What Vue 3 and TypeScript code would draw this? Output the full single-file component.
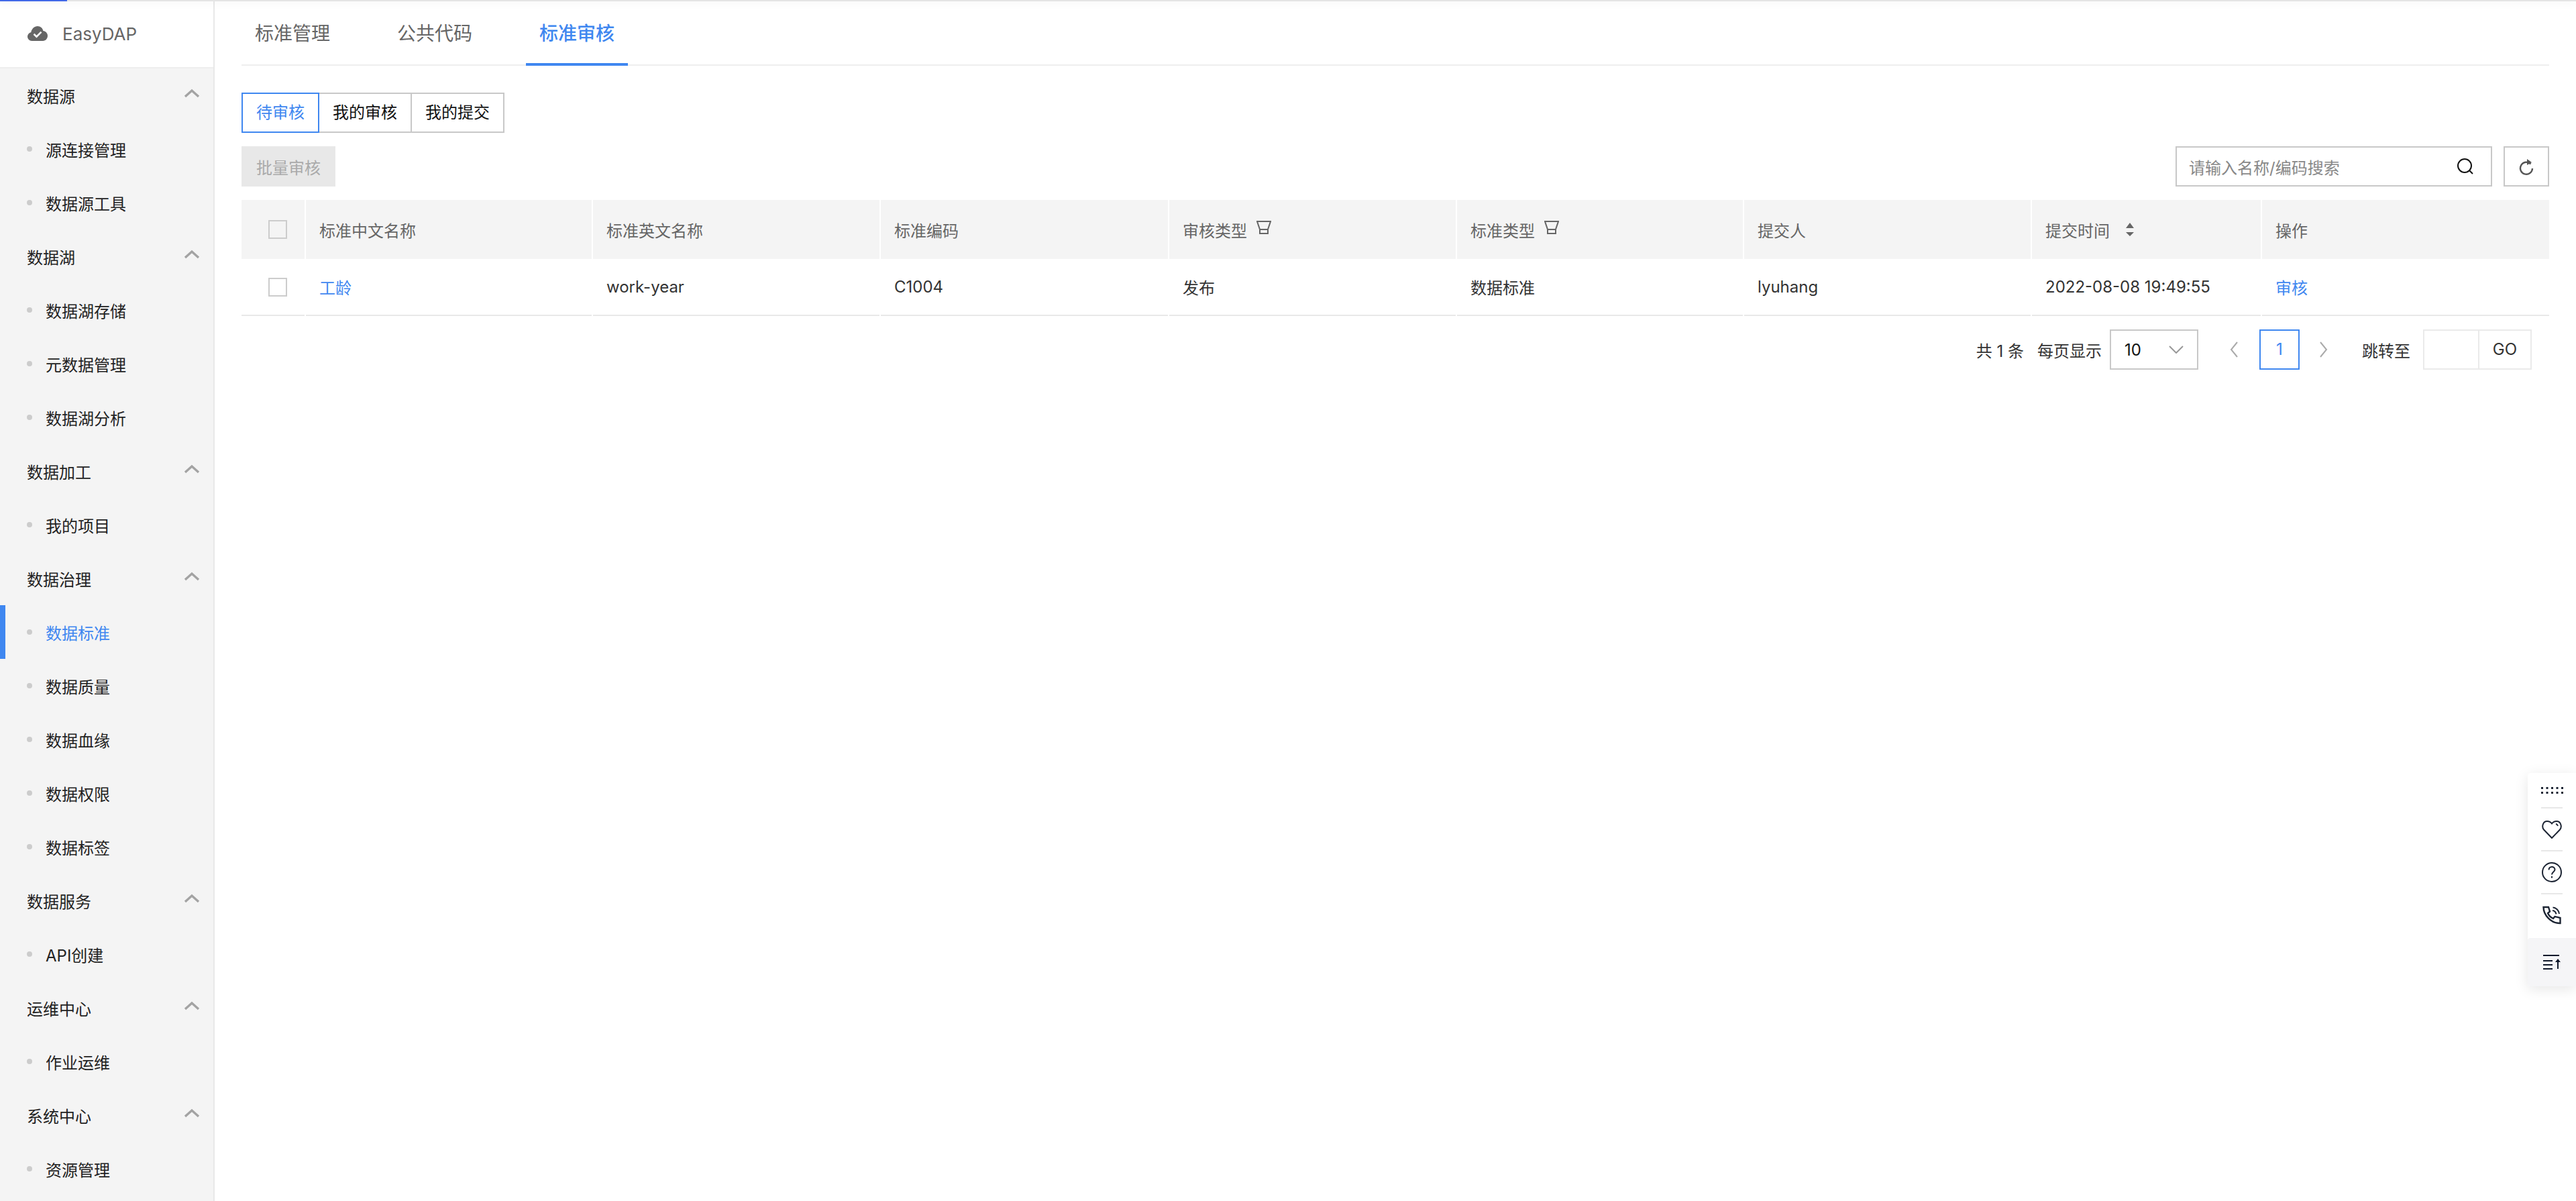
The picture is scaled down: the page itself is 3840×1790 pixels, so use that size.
<script setup lang="ts">
interface MenuGroup {
  name: string;
  items: string[];
}

const menu: MenuGroup[] = [
  { name: "数据源", items: ["源连接管理", "数据源工具"] },
  { name: "数据湖", items: ["数据湖存储", "元数据管理", "数据湖分析"] },
  { name: "数据加工", items: ["我的项目"] },
  { name: "数据治理", items: ["数据标准", "数据质量", "数据血缘", "数据权限", "数据标签"] },
  { name: "数据服务", items: ["API创建"] },
  { name: "运维中心", items: ["作业运维"] },
  { name: "系统中心", items: ["资源管理"] },
];

const tabs = ["标准管理", "公共代码", "标准审核"];
const reviewTabs = ["待审核", "我的审核", "我的提交"];

const columns = [
  { title: "标准中文名称", value: "工龄", link: true },
  { title: "标准英文名称", value: "work-year" },
  { title: "标准编码", value: "C1004" },
  { title: "审核类型", value: "发布", filter: true },
  { title: "标准类型", value: "数据标准", filter: true },
  { title: "提交人", value: "lyuhang" },
  { title: "提交时间", value: "2022-08-08 19:49:55", sort: true },
  { title: "操作", value: "审核", link: true },
];
</script>

<template>
  <div class="page">
    <div class="top-bar"><div class="progress"></div></div>

    <aside class="side">
      <div class="logo">
        <svg class="logo-icon" width="30" height="22" viewBox="0 0 30 22">
          <path fill="#666" d="M15 0c4.300 0 7.700 3 8.300 7.100C27 7.600 30 10.500 30 14.300 30 18.600 27 22 23 22H6.500C2.800 22 0 19.200 0 15.600c0-3.200 2.200-5.800 5.200-6.400C6.300 3.900 10.200 0 15 0z" />
          <path fill="none" stroke="#fff" stroke-width="2.600" d="M9.500 11.800l4 3.800 7-7" />
        </svg>
        <span>EasyDAP</span>
      </div>
      <template v-for="group in menu" :key="group.name">
        <div class="group">
          <span>{{ group.name }}</span>
          <svg width="24" height="14" viewBox="0 0 24 14">
            <path fill="none" stroke="#a3a3a3" stroke-width="3.400" d="M2 12L12 3l10 9" />
          </svg>
        </div>
        <div v-for="item in group.items" :key="item" class="item" :class="{ active: item === '数据标准' }">
          <i class="dot"></i>{{ item }}
        </div>
      </template>
    </aside>

    <main class="main">
      <nav class="tabs">
        <div v-for="(t, i) in tabs" :key="t" class="tab" :class="{ on: i === 2 }">{{ t }}</div>
      </nav>

      <div class="review-tabs">
        <div v-for="(t, i) in reviewTabs" :key="t" class="review-tab" :class="{ on: i === 0 }">{{ t }}</div>
      </div>

      <div class="toolbar">
        <button class="batch">批量审核</button>
        <div class="tools">
          <div class="search">
            <span>请输入名称/编码搜索</span>
            <svg width="26" height="26" viewBox="0 0 26 26">
              <circle cx="12" cy="12" r="10" fill="none" stroke="#111" stroke-width="2" />
              <path fill="none" stroke="#111" stroke-width="2" d="M19 19l5 5" />
            </svg>
          </div>
          <div class="refresh">
            <svg width="24" height="26" viewBox="0 0 24 26">
              <path fill="none" stroke="#555" stroke-width="2.400" d="M18.500 9.500A9 9 0 1 0 21 16" />
              <path fill="#555" d="M13 2l7 5-7 4z" />
            </svg>
          </div>
        </div>
      </div>

      <div class="table">
        <div class="cell head check-cell"><i class="check"></i></div>
        <div v-for="c in columns" :key="c.title" class="cell head">
          {{ c.title }}
          <svg v-if="c.filter" class="filter" width="22" height="20" viewBox="0 0 22 20">
            <path fill="none" stroke="#666" stroke-width="2" d="M1 1h20l-4 12v6H5v-6zM5 13h12" />
          </svg>
          <svg v-if="c.sort" class="sort" width="12" height="20" viewBox="0 0 12 20">
            <path fill="#666" d="M6 0l6 8H0zM0 14h12l-6 6z" />
          </svg>
        </div>
        <div class="cell body check-cell"><i class="check"></i></div>
        <div v-for="c in columns" :key="c.value" class="cell body" :class="{ link: c.link }">{{ c.value }}</div>
      </div>

      <div class="pager">
        <span class="total">共 1 条</span>
        <span class="per">每页显示</span>
        <div class="size">
          <span>10</span>
          <svg width="22" height="12" viewBox="0 0 22 12">
            <path fill="none" stroke="#999" stroke-width="2" d="M1 1l10 10L21 1" />
          </svg>
        </div>
        <div class="arrow first">
          <svg width="12" height="24" viewBox="0 0 12 24"><path fill="none" stroke="#aaa" stroke-width="2" d="M11 1L2 12l9 11" /></svg>
        </div>
        <div class="num">1</div>
        <div class="arrow">
          <svg width="12" height="24" viewBox="0 0 12 24"><path fill="none" stroke="#aaa" stroke-width="2" d="M1 1l9 11-9 11" /></svg>
        </div>
        <span class="jump">跳转至</span>
        <div class="jump-input"></div>
        <div class="go">GO</div>
      </div>
    </main>

    <div class="float">
      <div class="float-cell grip">
        <svg width="34" height="12" viewBox="0 0 34 12" fill="#1c2433">
          <template v-for="x in [1, 8.500, 16, 23.500, 31]" :key="x">
            <rect :x="x" y="1" width="3" height="3" />
            <rect :x="x" y="8" width="3" height="3" />
          </template>
        </svg>
      </div>
      <div class="line"></div>
      <div class="float-cell">
        <svg width="30" height="28" viewBox="0 0 30 28" fill="none" stroke="#1c2433" stroke-width="2">
          <path d="M15 27L3 14.500C-.5 10.500 1.500 2 8 2c3 0 5.500 1.500 7 3.500C16.500 3.500 19 2 22 2c6.500 0 8.500 8.500 5 12.500z" />
          <path d="M21 6c1.500.3 2.500 1.300 3 3" />
        </svg>
      </div>
      <div class="line"></div>
      <div class="float-cell">
        <svg width="30" height="30" viewBox="0 0 30 30" fill="none" stroke="#1c2433" stroke-width="2">
          <circle cx="15" cy="15" r="14" />
          <path d="M10.500 11.500c0-6 9-6 9-.5 0 3.500-4.500 3.500-4.500 7.500" />
          <path d="M15 21v2.500" />
        </svg>
      </div>
      <div class="line"></div>
      <div class="float-cell">
        <svg width="28" height="28" viewBox="0 0 28 28" fill="none" stroke="#1c2433" stroke-width="2">
          <path stroke-width="2.400" d="M1.500 2H9l2 6.500-3 2.500c1.500 3.500 4.500 6.500 8 8l2.500-3 8 2v8C13.500 26.500 1.500 14.500 1.500 2z" />
          <path d="M15 7c3 .5 5 2.500 5.500 5.500M15.500 2.500c5 .5 9 4.500 9.500 9.500" />
        </svg>
      </div>
      <div class="float-bottom">
        <svg width="26" height="22" viewBox="0 0 26 22" fill="none" stroke="#10182a" stroke-width="2">
          <path d="M0 1h24M0 9h14M0 15h14M0 21h14M22 21V8" />
          <path fill="#10182a" stroke="none" d="M22 6l4 5h-8z" />
        </svg>
      </div>
    </div>
  </div>
</template>

<style>
html,
body {
  margin: 0;
  overflow: hidden;
  background: #fff;
}
</style>

<style scoped>
.page {
  position: relative;
  display: flex;
  width: 3840px;
  height: 1790px;
  overflow: hidden;
  font-family: Inter, "Noto Sans CJK SC", sans-serif;
  font-size: 24px;
  color: #333;
}

.top-bar {
  position: absolute;
  top: 0;
  left: 0;
  right: 0;
  height: 2px;
  background: #e4e4e4;
  box-shadow: 0 2px 12px rgba(0, 0, 0, 0.12);
}

.progress {
  width: 100px;
  height: 2px;
  background: #4169e8;
}

.side {
  flex: none;
  box-sizing: border-box;
  width: 320px;
  background: #f4f4f4;
  border-right: 2px solid #e8e8e8;
}

.logo {
  display: flex;
  align-items: center;
  height: 100px;
  padding-left: 41px;
  background: #fff;
  border-bottom: 2px solid #eee;
  font-size: 26px;
  color: #666;
}

.logo-icon {
  margin-right: 22px;
}

.group {
  display: flex;
  align-items: center;
  justify-content: space-between;
  box-sizing: border-box;
  height: 80px;
  padding: 0 20px 0 40px;
  color: #222;
}

.group svg {
  margin-top: -6px;
}

.item {
  display: flex;
  align-items: center;
  box-sizing: border-box;
  height: 80px;
  padding-left: 40px;
  color: #222;
}

.item.active {
  color: #3f87f0;
  box-shadow: inset 8px 0 0 #3f87f0;
}

.dot {
  width: 8px;
  height: 8px;
  margin-right: 20px;
  border-radius: 50%;
  background: #ccc;
}

.main {
  flex: 1;
  min-width: 0;
  padding: 0 40px;
}

.tabs {
  display: flex;
  height: 98px;
  box-sizing: border-box;
  border-bottom: 2px solid #eee;
}

.tab {
  height: 98px;
  box-sizing: border-box;
  margin-right: 60px;
  padding: 30px 20px 0;
  font-size: 28px;
  line-height: 40px;
  color: #666;
}

.tab.on {
  color: #3f87f0;
  font-weight: 500;
  border-bottom: 4px solid #3f87f0;
}

.review-tabs {
  display: flex;
  margin-top: 40px;
}

.review-tab {
  box-sizing: border-box;
  height: 60px;
  margin-left: -2px;
  padding: 0 20px;
  border: 2px solid #c8c8c8;
  line-height: 56px;
  color: #111;
}

.review-tab:first-child {
  margin-left: 0;
}

.review-tab.on {
  position: relative;
  border-color: #3f87f0;
  color: #3f87f0;
}

.toolbar {
  display: flex;
  justify-content: space-between;
  margin-top: 20px;
}

.batch {
  width: 140px;
  height: 60px;
  padding: 0;
  border: none;
  background: #e8e8e8;
  font: inherit;
  color: #aaa;
}

.tools {
  display: flex;
  gap: 17px;
}

.search {
  display: flex;
  align-items: center;
  justify-content: space-between;
  box-sizing: border-box;
  width: 472px;
  height: 60px;
  padding: 0 25px 0 18px;
  border: 2px solid #c8c8c8;
  color: #888;
}

.refresh {
  display: flex;
  align-items: center;
  justify-content: center;
  box-sizing: border-box;
  width: 68px;
  height: 60px;
  border: 2px solid #c8c8c8;
}

.table {
  display: grid;
  grid-template-columns: 96px 428px 429px 430px 429px 428px 429px 343px 428px;
  grid-template-rows: 88px 85px;
  margin-top: 20px;
}

.cell {
  display: flex;
  align-items: center;
  box-sizing: border-box;
  padding-left: 20px;
}

.head {
  background: #f4f4f4;
  color: #666;
  box-shadow: inset -2px 0 0 #fff;
}

.head:nth-child(9) {
  box-shadow: none;
}

.body {
  border-bottom: 2px solid #e8e8e8;
  color: #333;
  box-shadow: inset -2px -2px 0 #fff;
  position: relative;
}

.body::after {
  content: "";
  position: absolute;
  top: 83px;
  right: 0;
  width: 2px;
  height: 2px;
  background: #fff;
}

.body:last-child::after {
  display: none;
}

.check-cell {
  padding-left: 40px;
}

.check {
  box-sizing: border-box;
  width: 28px;
  height: 28px;
  border: 2px solid #ccc;
  background: #fff;
}

.head.check-cell .check {
  background: transparent;
}

.link {
  color: #3f87f0;
}

.filter {
  margin-left: 14px;
  margin-top: -6px;
}

.sort {
  margin-left: 24px;
}

.pager {
  display: flex;
  align-items: center;
  justify-content: flex-end;
  height: 60px;
  margin-top: 20px;
  padding-right: 26px;
}

.per {
  margin-left: 20px;
}

.size {
  display: flex;
  align-items: center;
  justify-content: space-between;
  box-sizing: border-box;
  width: 132px;
  height: 60px;
  margin-left: 12px;
  padding: 0 20px 0 20px;
  border: 2px solid #c8c8c8;
  color: #111;
}

.arrow {
  display: flex;
  align-items: center;
  justify-content: center;
  width: 60px;
  height: 60px;
}

.arrow.first {
  margin-left: 23px;
  margin-right: 8px;
}

.num {
  box-sizing: border-box;
  width: 60px;
  height: 60px;
  margin-right: 6px;
  border: 2px solid #3f87f0;
  text-align: center;
  line-height: 56px;
  color: #3f87f0;
}

.jump {
  margin-left: 27px;
}

.jump-input {
  box-sizing: border-box;
  width: 84px;
  height: 60px;
  margin-left: 19px;
  border: 2px solid #eaeaea;
}

.go {
  box-sizing: border-box;
  width: 80px;
  height: 60px;
  margin-left: -2px;
  border: 2px solid #eaeaea;
  text-align: center;
  line-height: 56px;
  color: #333;
}

.float {
  position: absolute;
  top: 1152px;
  right: 0;
  width: 72px;
  height: 318px;
  display: flex;
  flex-direction: column;
  align-items: center;
  background: #fff;
  border-radius: 4px 0 0 4px;
  box-shadow: 0 4px 20px rgba(0, 0, 0, 0.1);
}

.float-cell {
  display: flex;
  align-items: center;
  justify-content: center;
  height: 62px;
}

.grip {
  height: 50px;
  padding-top: 1px;
}

.line {
  flex: none;
  width: 32px;
  height: 2px;
  background: #e8e8e8;
}

.float-bottom {
  display: flex;
  align-items: center;
  justify-content: center;
  width: 100%;
  height: 72px;
  margin-top: auto;
  background: #f5f5f7;
  border-radius: 4px 0 0 4px;
}
</style>
